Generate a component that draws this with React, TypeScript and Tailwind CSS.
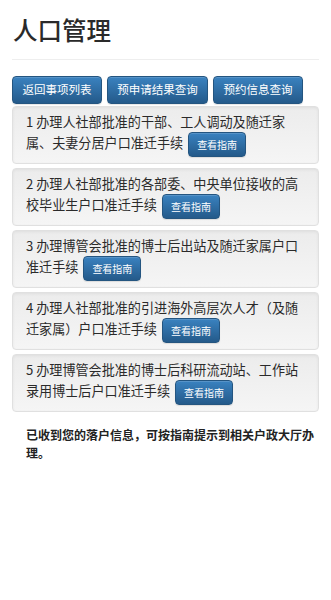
import React from "react";

const items = [
  "1 办理人社部批准的干部、工人调动及随迁家属、夫妻分居户口准迁手续",
  "2 办理人社部批准的各部委、中央单位接收的高校毕业生户口准迁手续",
  "3 办理博管会批准的博士后出站及随迁家属户口准迁手续",
  "4 办理人社部批准的引进海外高层次人才（及随迁家属）户口准迁手续",
  "5 办理博管会批准的博士后科研流动站、工作站录用博士后户口准迁手续",
];

const btn =
  "inline-flex items-center justify-center text-white rounded-[4px] border border-[#245580] bg-gradient-to-b from-[#3a82c0] to-[#245a8a] shadow-[inset_0_1px_0_rgba(255,255,255,0.15),0_1px_1px_rgba(0,0,0,0.1)]";

export default function App() {
  return (
    <div
      className="w-[331px] min-h-[600px] bg-white text-[#333] px-3"
      style={{ fontFamily: '"Noto Sans CJK SC", "Noto Sans", sans-serif' }}
    >
      <h1 className="pt-[14px] pb-[13px] pl-[1px] text-[24.5px] leading-[32px] font-medium text-[#2a2a2a]">
        人口管理
      </h1>
      <div className="border-t border-[#eee]" />
      <div className="flex gap-[5px] mt-[16px]">
        <button className={`${btn} w-[90px] h-[28px] text-[11.5px]`}>返回事项列表</button>
        <button className={`${btn} w-[101px] h-[28px] text-[11.5px]`}>预申请结果查询</button>
        <button className={`${btn} w-[90px] h-[28px] text-[11.5px]`}>预约信息查询</button>
      </div>
      <div className="flex flex-col gap-[4px] mt-[2px]">
        {items.map((t) => (
          <div
            key={t}
            className="rounded-[4px] border border-[#e0e0e0] bg-gradient-to-b from-[#ececec] to-[#f5f5f5] shadow-[inset_0_1px_3px_rgba(0,0,0,0.06)] pl-[13px] pr-[12px] pt-[5px] pb-[6px] text-[13.1px] leading-[20px] text-[#2a2a2a]"
          >
            {t}
            <button className={`${btn} ml-[5px] w-[58px] h-[25px] text-[10px] align-middle`}>
              查看指南
            </button>
          </div>
        ))}
      </div>
      <p className="mt-[14px] pl-[14px] pr-[2px] text-[12px] leading-[18px] font-bold text-[#222]">
        已收到您的落户信息，可按指南提示到相关户政大厅办理。
      </p>
    </div>
  );
}
